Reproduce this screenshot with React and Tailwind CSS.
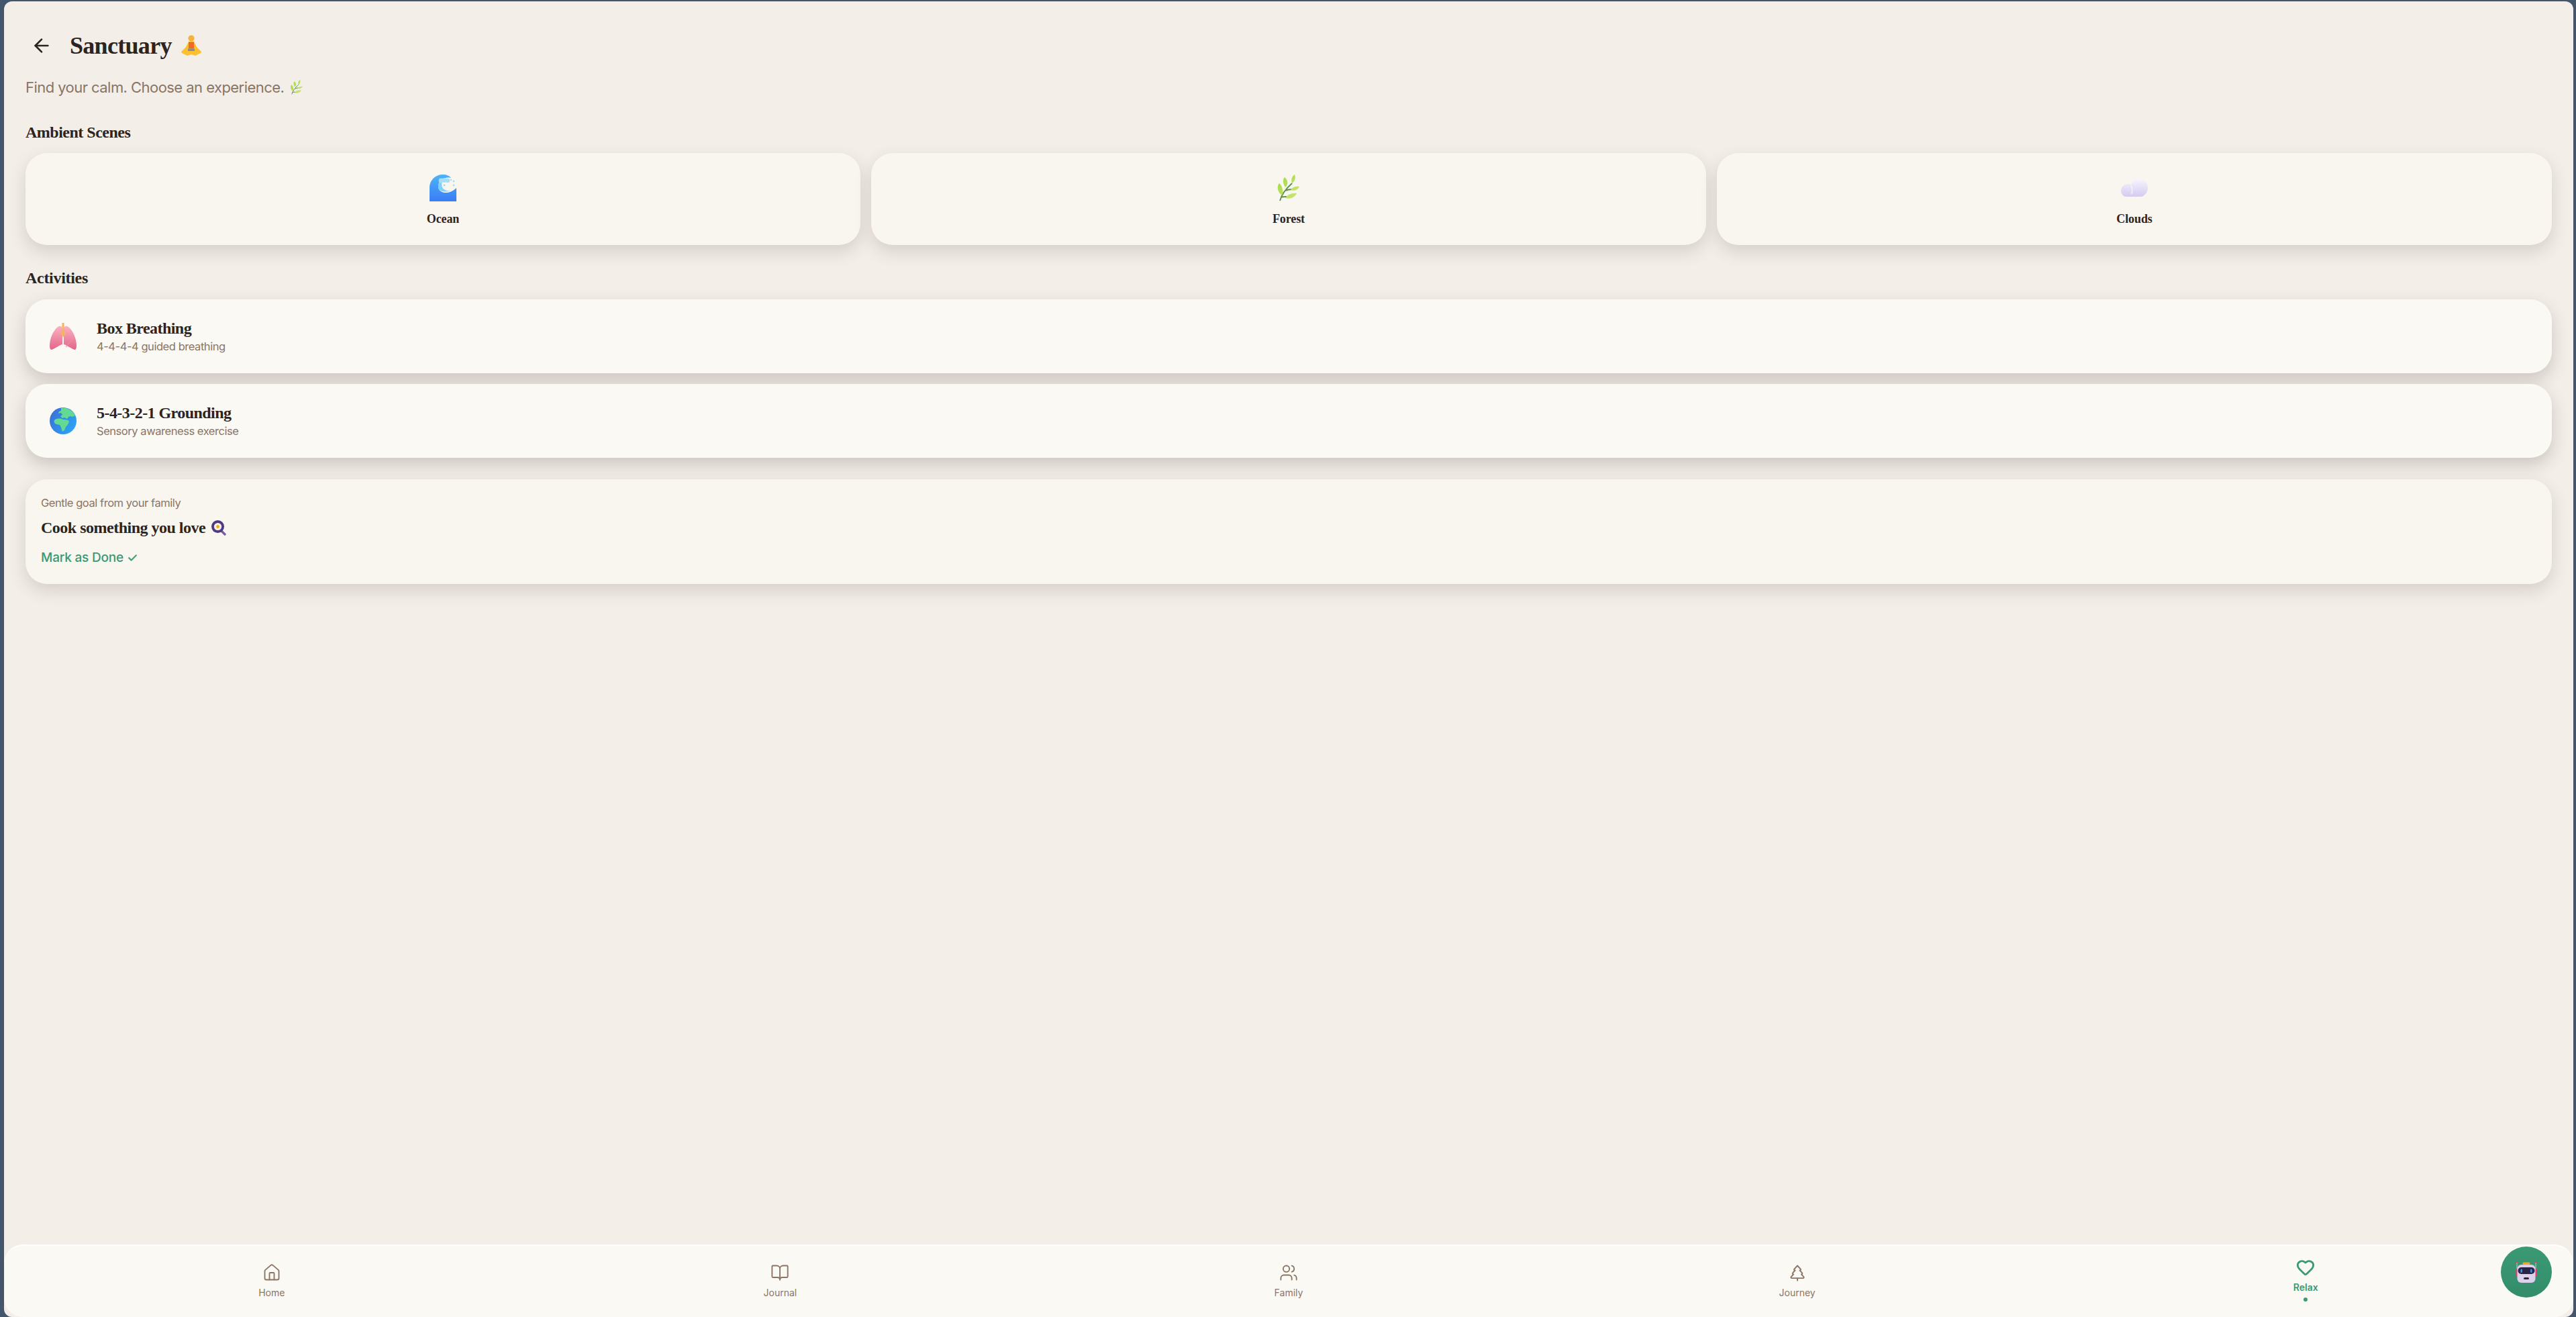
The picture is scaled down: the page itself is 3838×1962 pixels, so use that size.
import React from "react";
import { ArrowLeft, House, BookOpen, Users, TreePine, Heart } from "lucide-react";

const SERIF = { fontFamily: '"Liberation Serif", serif' };

function OceanIcon() {
  return (
    <svg className="h-10 w-10" viewBox="0 0 40 40">
      <defs>
        <linearGradient id="wave" x1="0" y1="0" x2="0" y2="1">
          <stop offset="0" stopColor="#4cb4fb" />
          <stop offset="1" stopColor="#3a7cf3" />
        </linearGradient>
      </defs>
      <path d="M0 40V20C0 8 9 0 20 0c5 0 10 2 12 5-8-2-19 2-19 13 0 9 14 14 27 2v20Z" fill="url(#wave)" />
      <path d="M13 18c0-6 4-10 9-11-3 3-5 7-3 12 2 4 7 6 12 5-7 3-18 2-18-6Z" fill="#7fd0fb" />
      <circle cx="17" cy="9" r="3.4" fill="#a6def9" />
      <circle cx="22" cy="8.5" r="3.4" fill="#a6def9" />
      <circle cx="27" cy="9" r="3.2" fill="#a6def9" />
      <circle cx="32" cy="8" r="1.3" fill="#a6def9" />
      <circle cx="36" cy="10" r="1.4" fill="#a6def9" />
      <circle cx="36" cy="16" r="1.4" fill="#a6def9" />
      <circle cx="22" cy="16" r="1.3" fill="#8fd4fa" />
    </svg>
  );
}

function HerbIcon({ className }) {
  return (
    <svg className={className} viewBox="0 0 40 40">
      <defs>
        <linearGradient id="leaf" x1="0" y1="0" x2="1" y2="1">
          <stop offset="0" stopColor="#a2d83e" />
          <stop offset="1" stopColor="#d0e67c" />
        </linearGradient>
      </defs>
      <path d="M7 39c2-8 8-17 18-26M8 34c3-1 6-1 9-1M16 24c3-2 6-2 10-2" fill="none" stroke="#5f8f4a" strokeWidth="1.8" />
      <path d="M6 13C2 17 3 26 10 31c3-6 0-15-4-18ZM14 4c-3 3-3 9 1 15 4-3 5-10-1-15ZM29 0c-4 2-6 8-4 13 4-2 6-8 4-13ZM36 18c-5-1-11 1-13 5 5 2 11 0 13-5ZM32 28c-7-1-14 2-17 7 6 2 14 0 17-7Z" fill="url(#leaf)" />
    </svg>
  );
}

function CloudIcon() {
  return (
    <svg className="h-10 w-10" viewBox="0 0 40 40">
      <defs>
        <linearGradient id="cloud" gradientUnits="userSpaceOnUse" x1="20" y1="7" x2="20" y2="33">
          <stop offset="0" stopColor="#f6f4fe" />
          <stop offset="1" stopColor="#d3cbf0" />
        </linearGradient>
        <clipPath id="cloudBottom">
          <rect x="0" y="0" width="40" height="33" rx="6" />
        </clipPath>
      </defs>
      <g clipPath="url(#cloudBottom)" fill="url(#cloud)">
        <ellipse cx="27" cy="20" rx="13" ry="13.5" />
        <ellipse cx="10" cy="24" rx="10" ry="10" />
        <rect x="8" y="24" width="22" height="9" />
      </g>
      <path d="M15 16c2 4 2 9 1 13" fill="none" stroke="#f6f4fe" strokeWidth="1.4" />
    </svg>
  );
}

function LungsIcon() {
  return (
    <svg className="h-10 w-10 shrink-0" viewBox="0 0 40 40">
      <defs>
        <linearGradient id="lung" x1="0.5" y1="0" x2="0.5" y2="1">
          <stop offset="0" stopColor="#fcb2c0" />
          <stop offset="1" stopColor="#e2658b" />
        </linearGradient>
      </defs>
      <path d="M14 5c3-1 5 1 5 4v23c-5 1-10 6-16 8-2 0-3-2-3-6C0 22 7 8 14 5Z" fill="url(#lung)" />
      <path d="M26 5c-3-1-5 1-5 4v23c5 1 10 6 16 8 2 0 3-2 3-6 0-12-7-26-14-29Z" fill="url(#lung)" />
      <path d="M3 22h13M24 36l12-14" stroke="#f58ba4" strokeWidth="1.6" opacity="0.7" />
      <path d="M20 0v18l-3-4M20 18l3-4" fill="none" stroke="#f5b45f" strokeWidth="3" />
    </svg>
  );
}

function GlobeIcon() {
  return (
    <svg className="h-10 w-10 shrink-0" viewBox="0 0 40 40">
      <defs>
        <linearGradient id="sea" x1="0" y1="0.2" x2="1" y2="0.8">
          <stop offset="0" stopColor="#3b6fd6" />
          <stop offset="1" stopColor="#2aa8f5" />
        </linearGradient>
      </defs>
      <circle cx="20" cy="20" r="20" fill="url(#sea)" />
      <path d="M17 1c7-2 17 3 21 11l-4 2-3-1-3 1-2 3-4-2-3 1-3-3 3-2-2-3-4 1 1-3 3-1ZM7 19c3-3 9-3 13-1 3 0 8 0 9 3-1 3-2 5-5 8l-2 5-3 2-2-6-2-4-5-1c-3-1-4-4-3-6Z" fill="#62da94" />
    </svg>
  );
}

function PanIcon() {
  return (
    <svg className="h-6 w-6" viewBox="0 0 24 24">
      <path d="m15 16 6 6" stroke="#7a5cb0" strokeWidth="3.4" strokeLinecap="round" />
      <circle cx="10.5" cy="10.5" r="9.5" fill="#4f3a80" />
      <circle cx="10.5" cy="10.5" r="5.6" fill="#fbf5e6" />
      <circle cx="10.5" cy="10.5" r="2.4" fill="#f5a623" />
    </svg>
  );
}

function MeditationIcon() {
  return (
    <svg className="h-8 w-[30px]" viewBox="0 0 30 32">
      <circle cx="15" cy="5" r="4.6" fill="#f7b23b" />
      <path d="M11 10h8l4 8 7 7-1 2-8 4-6-2-6 2-8-4-1-2 7-7Z" fill="#fcc033" />
      <path d="M11 10.5h8v10h-8Z" fill="#ef6a25" />
      <rect x="10" y="20.5" width="10" height="3.5" fill="#8c8a99" />
    </svg>
  );
}

function RobotIcon() {
  return (
    <svg className="h-8 w-8" viewBox="0 0 32 32">
      <circle cx="2" cy="1.8" r="1.5" fill="#f0376f" />
      <circle cx="30" cy="1.8" r="1.5" fill="#f0376f" />
      <path d="M2 2v20M30 2v20" stroke="#d9d2e6" strokeWidth="0.8" />
      <rect x="0.5" y="11" width="2.4" height="12" rx="1" fill="#f0376f" />
      <rect x="29.1" y="11" width="2.4" height="12" rx="1" fill="#f0376f" />
      <rect x="10.5" y="1.5" width="11" height="3.4" rx="1.5" fill="#f2a81d" />
      <rect x="2.5" y="5" width="27" height="27" rx="6" fill="#ddd0ea" />
      <rect x="3.5" y="9" width="25" height="10" rx="5" fill="#2a2344" />
      <rect x="7.5" y="11.5" width="2.4" height="5.5" rx="1.2" fill="#2e9bf0" />
      <rect x="22.1" y="11.5" width="2.4" height="5.5" rx="1.2" fill="#2e9bf0" />
      <rect x="12" y="24" width="8" height="3" rx="1.5" fill="#2a2344" />
    </svg>
  );
}

const SCENES = [
  { name: "Ocean", icon: <OceanIcon /> },
  { name: "Forest", icon: <HerbIcon className="h-10 w-10" /> },
  { name: "Clouds", icon: <CloudIcon /> },
];

const ACTIVITIES = [
  { name: "Box Breathing", sub: "4-4-4-4 guided breathing", icon: <LungsIcon /> },
  { name: "5-4-3-2-1 Grounding", sub: "Sensory awareness exercise", icon: <GlobeIcon /> },
];

const NAV = [
  { label: "Home", icon: House },
  { label: "Journal", icon: BookOpen },
  { label: "Family", icon: Users },
  { label: "Journey", icon: TreePine },
  { label: "Relax", icon: Heart, active: true },
];

export default function App() {
  return (
    <div className="h-screen bg-[#44566c] pt-[2px] pl-[6px] pr-[4px] font-['Inter',sans-serif]">
      <div className="relative flex h-full flex-col overflow-hidden rounded-[12px] bg-[#f3eee8] text-[#2c2420]">
        <main className="min-h-0 flex-1 px-8">
          <header className="mt-[48px] flex h-[36px] items-center gap-[26px] pl-[8px]">
            <ArrowLeft className="h-8 w-8" strokeWidth={2} />
            <div className="flex items-center gap-[14px]">
              <h1 className="text-[36px] font-bold leading-none tracking-[-0.7px]" style={SERIF}>Sanctuary</h1>
              <MeditationIcon />
            </div>
          </header>

          <p className="mt-[32px] flex h-[24px] items-center gap-[8px] text-[22px] tracking-[-0.55px] text-[#8a7565]">
            Find your calm. Choose an experience.
            <HerbIcon className="h-[22px] w-[22px]" />
          </p>

          <h2 className="mt-[43px] h-[24px] text-[24px] font-bold leading-[24px] tracking-[-0.5px]" style={SERIF}>Ambient Scenes</h2>

          <div className="mt-[19px] grid grid-cols-3 gap-4">
            {SCENES.map((s) => (
              <div key={s.name} className="flex h-[137px] flex-col items-center rounded-[32px] bg-[#f9f6ef] pt-[32px] shadow-[0_10px_24px_rgba(70,60,50,0.17)]">
                {s.icon}
                <span className="mt-[14px] text-[18px] font-bold leading-[24px] tracking-[-0.1px]" style={SERIF}>{s.name}</span>
              </div>
            ))}
          </div>

          <h2 className="mt-[37px] h-[24px] text-[24px] font-bold leading-[24px] tracking-[-0.3px]" style={SERIF}>Activities</h2>

          <div className="mt-[20px] flex flex-col gap-4">
            {ACTIVITIES.map((a) => (
              <div key={a.name} className="flex h-[110px] items-center gap-[30px] rounded-[32px] bg-[#fbf9f4] pl-[36px] shadow-[0_10px_24px_rgba(70,60,50,0.22)]">
                {a.icon}
                <div>
                  <div className="text-[24px] font-bold leading-[30px] tracking-[-0.55px]" style={SERIF}>{a.name}</div>
                  <div className="text-[16.5px] leading-[24px] tracking-[-0.45px] text-[#8a7565]">{a.sub}</div>
                </div>
              </div>
            ))}
          </div>

          <section className="mt-8 h-[156px] rounded-[32px] bg-[#f9f6ef] pl-[23px] pt-[22px] shadow-[0_10px_24px_rgba(70,60,50,0.17)]">
            <p className="text-[16.5px] leading-[26px] tracking-[-0.45px] text-[#8a7565]">Gentle goal from your family</p>
            <div className="mt-[10px] flex h-[28px] items-center gap-[8px]">
              <span className="text-[24px] font-bold leading-[28px] tracking-[-0.5px]" style={SERIF}>Cook something you love</span>
              <PanIcon />
            </div>
            <p className="mt-[17px] text-[19px] font-medium leading-[28px] tracking-[-0.2px] text-[#3a9a74]">Mark as Done ✓</p>
          </section>
        </main>

        <nav className="grid h-[108px] shrink-0 grid-cols-5 rounded-[28px] border-t-2 border-white bg-[#fbf9f4] px-5">
          {NAV.map(({ label, icon: Icon, active }) => (
            <div key={label} className={`flex flex-col items-center ${active ? "pt-[18px] text-[#3a9a74]" : "pt-[26px] text-[#8a7565]"}`}>
              <Icon className="h-7 w-7" strokeWidth={active ? 2.4 : 1.6} />
              <span className={`mt-[7px] text-[14px] leading-[18px] ${active ? "font-semibold" : "font-normal"}`}>{label}</span>
              {active && <span className="mt-[6px] h-[6px] w-[6px] rounded-full bg-[#3a9a74]" />}
            </div>
          ))}
        </nav>

        {/* chat button sits over the nav */}
        <button className="absolute bottom-[29px] right-[32px] flex h-[76px] w-[76px] items-center justify-center rounded-full bg-gradient-to-b from-[#3a9a74] to-[#338c6b]">
          <RobotIcon />
        </button>
      </div>
    </div>
  );
}
